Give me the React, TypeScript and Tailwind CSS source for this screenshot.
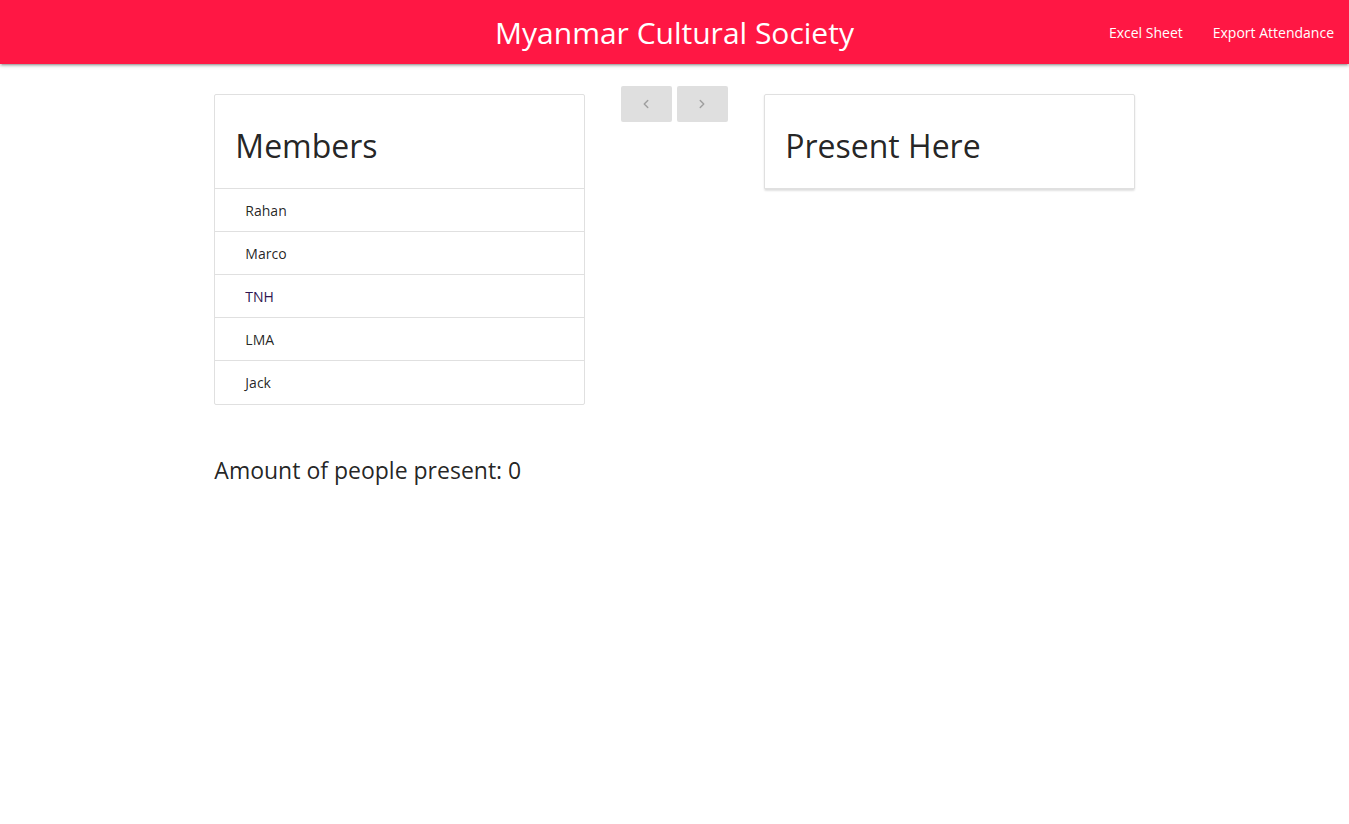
import { ChevronLeft, ChevronRight } from 'lucide-react'

const members = ['Rahan', 'Marco', 'TNH', 'LMA', 'Jack']

function Navbar() {
  return (
    <nav className="relative h-16 bg-[#ff1744] text-white shadow-[0_2px_2px_0_rgba(0,0,0,0.14),0_3px_1px_-2px_rgba(0,0,0,0.12),0_1px_5px_0_rgba(0,0,0,0.2)]">
      <div className="absolute left-1/2 top-0 -translate-x-1/2 text-[30px] leading-[66px] whitespace-nowrap">
        Myanmar Cultural Society
      </div>
      <ul className="flex justify-end h-16 items-center text-[14px]">
        <li className="px-[15px]">Excel Sheet</li>
        <li className="px-[15px]">Export Attendance</li>
      </ul>
    </nav>
  )
}

function PanelHeader({ title }: { title: string }) {
  return (
    <div className="h-[94px] border-b border-[#e0e0e0] px-5 flex items-center">
      <h4 className="text-[32px] text-[rgba(0,0,0,0.87)] pt-[9px]">{title}</h4>
    </div>
  )
}

export default function App() {
  return (
    <div className="min-h-screen bg-white" style={{ fontFamily: '"Open Sans", "Noto Sans", sans-serif' }}>
      <Navbar />
      <div className="w-[70%] mx-auto">
        <div className="flex">
          <div className="w-5/12 pl-3 pr-[11px] pt-[30px]">
            <div className="border border-[#e0e0e0] rounded-[2px]">
              <PanelHeader title="Members" />
              {members.map((m, i) => (
                <div
                  key={m}
                  className={`h-[43px] flex items-center pl-[30px] text-[14px] ${
                    i < members.length - 1 ? 'border-b border-[#e0e0e0]' : ''
                  } ${m === 'TNH' ? 'text-[#2e1450]' : 'text-[rgba(0,0,0,0.87)]'}`}
                >
                  {m}
                </div>
              ))}
            </div>
          </div>
          <div className="w-2/12 px-3 pt-[22px] flex justify-center gap-[5px]">
            <button className="w-[51px] h-9 rounded-[2px] bg-[#dfdfdf] flex items-center justify-center text-[#9f9f9f]">
              <ChevronLeft size={14} strokeWidth={2.5} />
            </button>
            <button className="w-[51px] h-9 rounded-[2px] bg-[#dfdfdf] flex items-center justify-center text-[#9f9f9f]">
              <ChevronRight size={14} strokeWidth={2.5} />
            </button>
          </div>
          <div className="w-5/12 pl-[11px] pr-3 pt-[30px]">
            <div className="border border-[#e0e0e0] rounded-[2px] shadow-[0_1px_2px_rgba(0,0,0,0.12)]">
              <PanelHeader title="Present Here" />
            </div>
          </div>
        </div>
        <div className="pl-3 pt-[48px] text-[23px] text-[rgba(0,0,0,0.87)]">
          Amount of people present: 0
        </div>
      </div>
    </div>
  )
}
